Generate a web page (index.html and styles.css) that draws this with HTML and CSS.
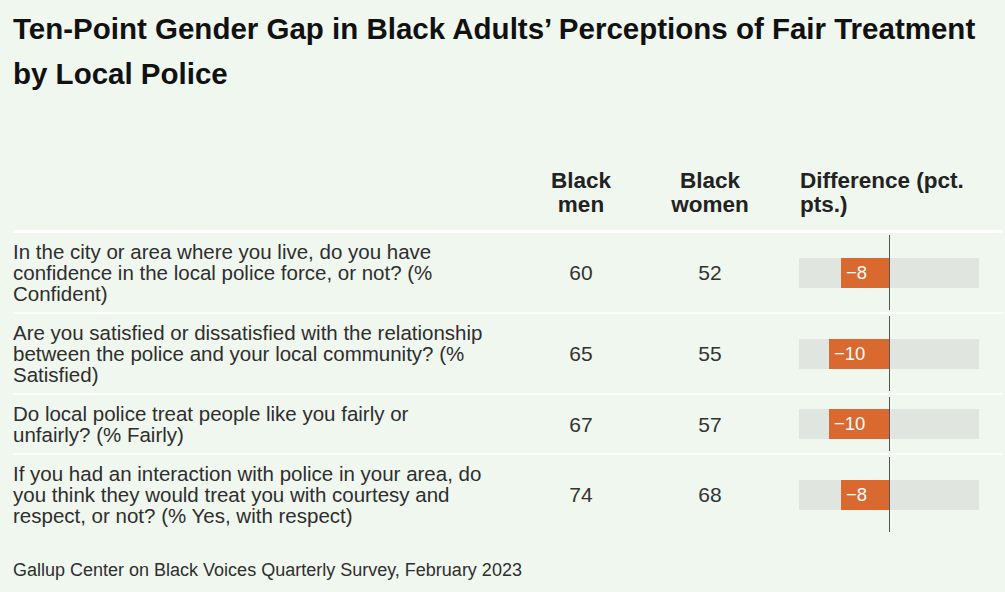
FILE: index.html
```html
<!DOCTYPE html>
<html lang="en">
<head>
<meta charset="utf-8">
<title>Ten-Point Gender Gap</title>
<link rel="stylesheet" href="styles.css">
</head>
<body>
<div class="page">
  <h1 class="title">Ten-Point Gender Gap in Black Adults’ Perceptions of Fair Treatment by Local Police</h1>
  <div class="table">
    <div class="row head">
      <div class="q"></div>
      <div class="num">Black<br>men</div>
      <div class="num">Black<br>women</div>
      <div class="diff-head">Difference (pct.<br>pts.)</div>
    </div>
    <div class="row">
      <div class="q">In the city or area where you live, do you have confidence in the local police force, or not? (% Confident)</div>
      <div class="num">60</div>
      <div class="num">52</div>
      <div class="diff"><div class="zero"></div><div class="track"><div class="bar" style="width:48px">−8</div></div></div>
    </div>
    <div class="row">
      <div class="q">Are you satisfied or dissatisfied with the relationship between the police and your local community? (% Satisfied)</div>
      <div class="num">65</div>
      <div class="num">55</div>
      <div class="diff"><div class="zero"></div><div class="track"><div class="bar" style="width:60px">−10</div></div></div>
    </div>
    <div class="row">
      <div class="q">Do local police treat people like you fairly or unfairly? (% Fairly)</div>
      <div class="num">67</div>
      <div class="num">57</div>
      <div class="diff"><div class="zero"></div><div class="track"><div class="bar" style="width:60px">−10</div></div></div>
    </div>
    <div class="row">
      <div class="q">If you had an interaction with police in your area, do you think they would treat you with courtesy and respect, or not? (% Yes, with respect)</div>
      <div class="num">74</div>
      <div class="num">68</div>
      <div class="diff"><div class="zero"></div><div class="track"><div class="bar" style="width:48px">−8</div></div></div>
    </div>
  </div>
  <p class="source">Gallup Center on Black Voices Quarterly Survey, February 2023</p>
</div>
</body>
</html>
```
FILE: styles.css
```css
html, body {
  margin: 0;
  padding: 0;
  background: #f0f7ef;
}
body {
  font-family: "Liberation Sans", Arial, sans-serif;
  color: #2e2e2e;
}
.page {
  padding: 6px 2px 0 13px;
}
.title {
  margin: 0;
  font-size: 29.5px;
  line-height: 45px;
  font-weight: 700;
  color: #111;
  width: 980px;
}
.table {
  margin-top: 73px;
  display: flex;
  flex-direction: column;
}
.row {
  display: grid;
  grid-template-columns: 504px 128px 130px 228px;
  border-top: 2px solid #ffffff;
  align-items: center;
}
.row.head {
  border-top: none;
  border-bottom: 1px solid #ffffff;
  padding-bottom: 13px;
  align-items: end;
}
.head .num, .diff-head {
  font-size: 22.5px;
  line-height: 24px;
  font-weight: 700;
  color: #222;
}
.diff-head {
  padding-left: 25px;
}
.q {
  font-size: 20.5px;
  line-height: 21px;
  padding: 8px 30px 8px 0;
  color: #2e2e2e;
}
.num {
  text-align: center;
  font-size: 21px;
  line-height: 21px;
  color: #333;
}
.diff {
  position: relative;
  align-self: stretch;
  display: flex;
  align-items: center;
  padding-left: 24px;
}
.track {
  width: 180px;
  height: 30px;
  background: #e0e6df;
  display: flex;
  justify-content: flex-end;
  padding-right: 90px;
  box-sizing: border-box;
}
.bar {
  height: 30px;
  background: #da6930;
  color: #fff;
  font-size: 18.5px;
  line-height: 30px;
  padding-left: 5px;
  box-sizing: border-box;
}
.zero {
  position: absolute;
  left: 114px;
  top: 2px;
  bottom: 2px;
  width: 1px;
  background: #555;
  z-index: 1;
}
.source {
  margin: 26px 0 0;
  font-size: 18px;
  line-height: 21px;
  color: #2e2e2e;
}
```
